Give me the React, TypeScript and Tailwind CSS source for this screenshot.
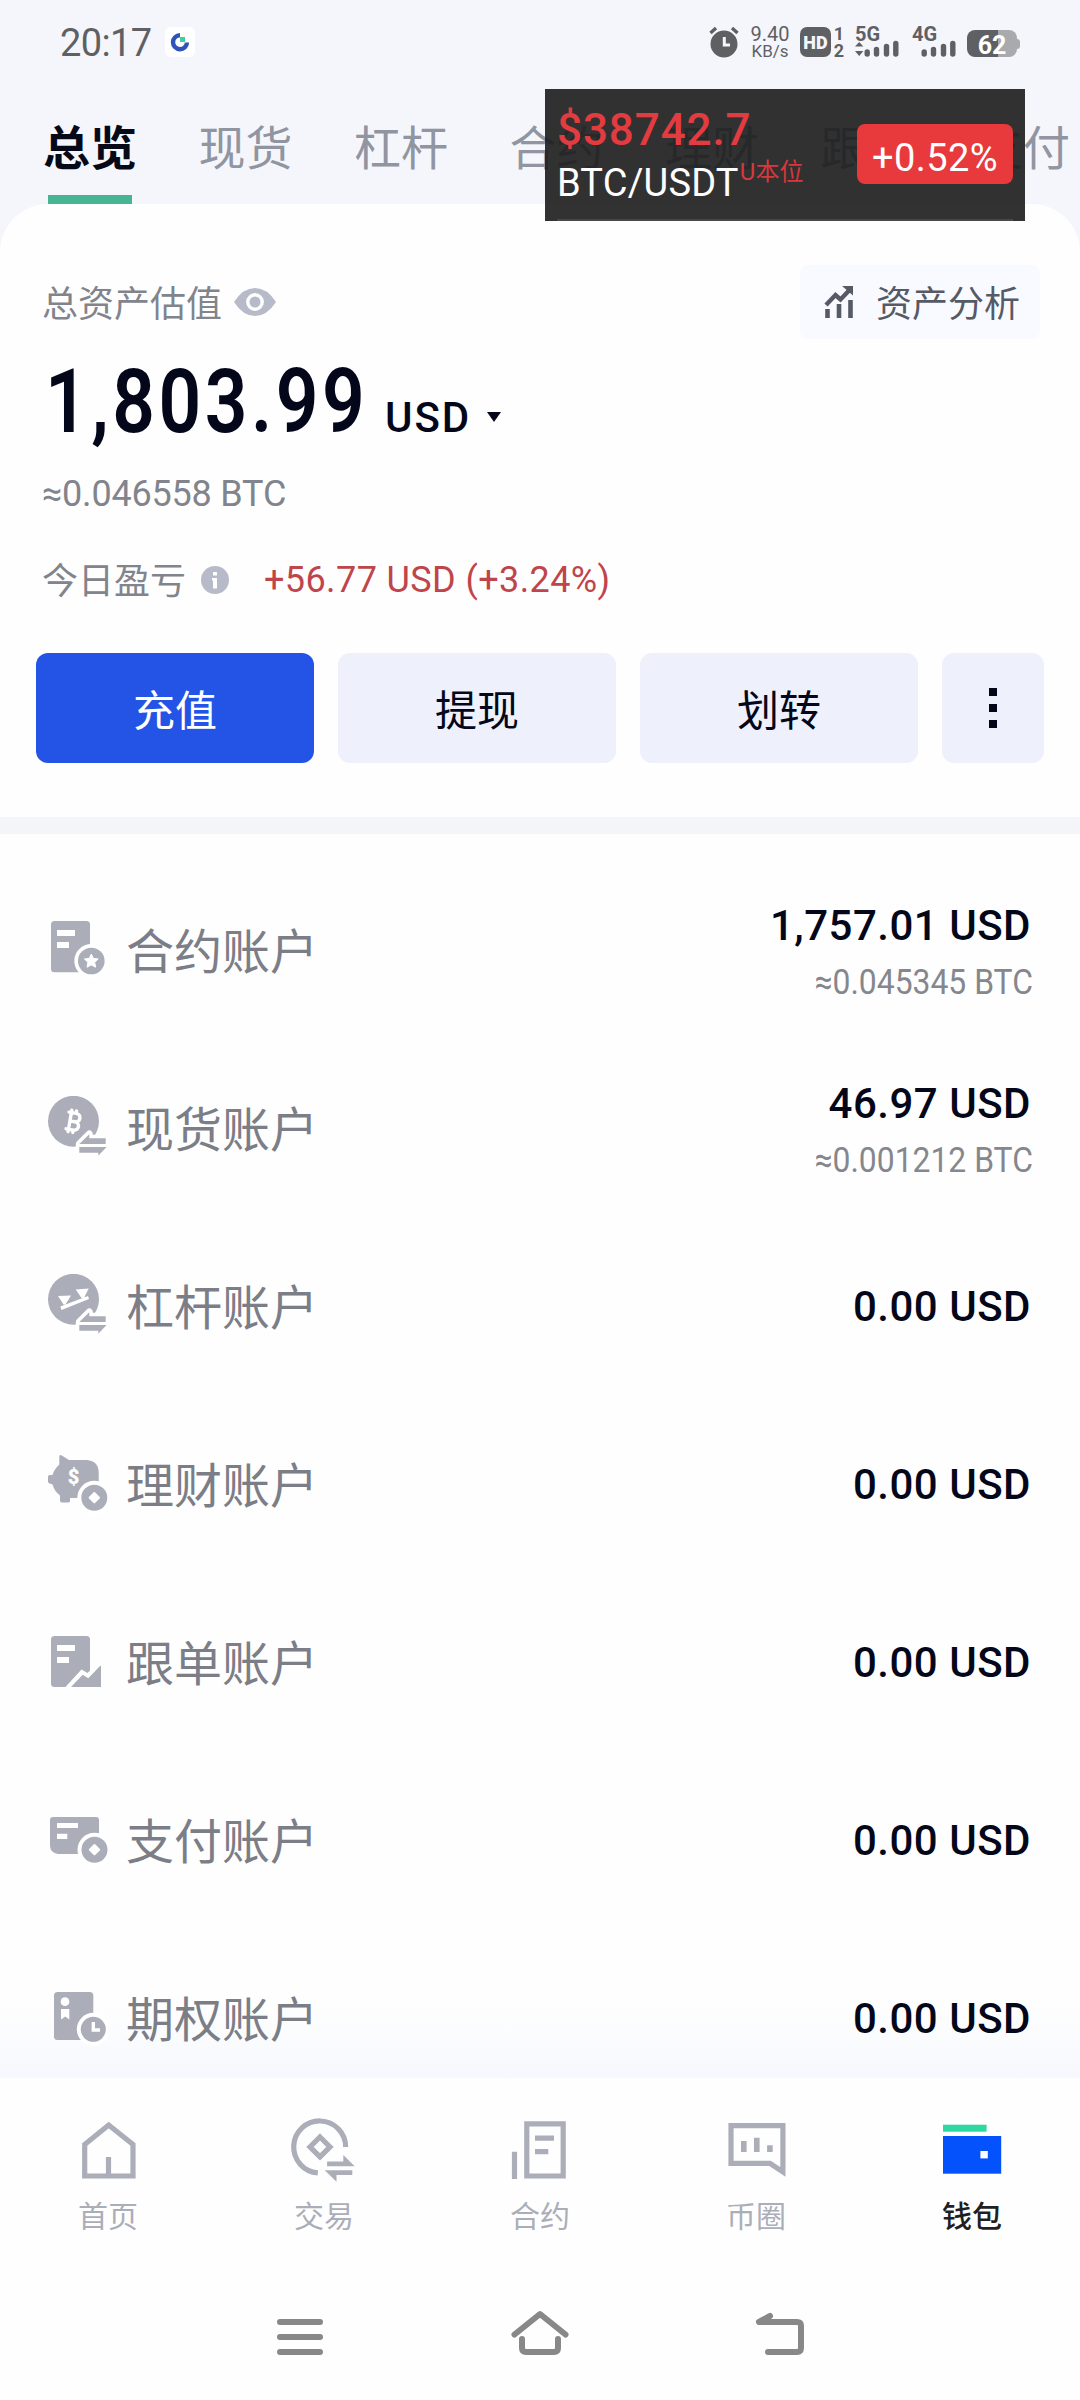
import type { ReactNode } from 'react'
import { Bitcoin } from 'lucide-react'

interface Account {
  name: string
  usd: string
  btc?: string
  icon: ReactNode
}

interface NavItem {
  label: string
  icon: ReactNode
  active?: boolean
}

const GREY = '#abaeb8'

const TABS = ['总览', '现货', '杠杆', '合约', '理财', '跟单', '支付']

function SwapArrows() {
  return (
    <>
      <path
        d="M31.3 48L41.3 38V42.3H57.7V56.7H31.3Z"
        fill="#fff" stroke="#fff" strokeWidth={7} strokeLinejoin="round"
      />
      <path d="M31.3 48L41.3 38.3V42.3H57.7V48Z" fill={GREY} />
      <path d="M31.3 51H58.6L50.3 59.7V56.7H31.3Z" fill={GREY} />
    </>
  )
}

function Coin({ cx, cy }: { cx: number; cy: number }) {
  return (
    <>
      <circle cx={cx} cy={cy} r={17} fill="#fff" />
      <circle cx={cx} cy={cy} r={13} fill={GREY} />
      <rect x={-4.3} y={-4.3} width={8.6} height={8.6} rx={1} fill="#fff" transform={`translate(${cx} ${cy}) rotate(45)`} />
    </>
  )
}

const ACCOUNTS: Account[] = [
  {
    name: '合约账户',
    usd: '1,757.01',
    btc: '0.045345',
    icon: (
      <>
        <rect x={3} y={3} width={39} height={51.3} rx={3.5} fill={GREY} />
        <path d="M9 12H27V18H9ZM9 24H21V30H9Z" fill="#fff" />
        <circle cx={43.3} cy={43} r={17} fill="#fff" />
        <circle cx={43.3} cy={43} r={13.3} fill={GREY} />
        <path d="M43.3 36L45.4 40.4L50.2 41L46.7 44.3L47.6 49.2L43.3 46.9L39 49.2L39.9 44.3L36.4 41L41.2 40.4Z" fill="#fff" stroke="#fff" strokeLinejoin="round" />
      </>
    ),
  },
  {
    name: '现货账户',
    usd: '46.97',
    btc: '0.001212',
    icon: (
      <>
        <circle cx={25.5} cy={25.3} r={25.5} fill={GREY} />
        <Bitcoin x={11} y={11} width={29} height={29} color="#fff" strokeWidth={2.8} />
        <SwapArrows />
      </>
    ),
  },
  {
    name: '杠杆账户',
    usd: '0.00',
    icon: (
      <>
        <circle cx={25.5} cy={25.3} r={25.5} fill={GREY} />
        <path d="M10 22L23 21.5L17.5 30.5H15.5ZM12.3 32.5L40 22L41 25L13.5 36ZM27.7 15.5L40.7 14.5L36 24H33.5Z" fill="#fff" />
        <SwapArrows />
      </>
    ),
  },
  {
    name: '理财账户',
    usd: '0.00',
    icon: (
      <>
        <path d="M11.3 4.5Q11.6 2.3 13.8 3.6L21 8H39Q50.7 9 50.7 21V46H22V49Q22 50.5 20 50.5H14Q12 50.5 12 48.5V43.5Q6.5 39.5 4.6 32.5L1.5 31.5Q0 31 0 29.5V24.5Q0 23 2 23H4.5Q6 17.5 11.3 12.5Z" fill={GREY} />
        <text x={25.5} y={31.5} textAnchor="middle" fontSize={20} fontWeight={900} fill="#fff">$</text>
        <Coin cx={46.3} cy={45.7} />
      </>
    ),
  },
  {
    name: '跟单账户',
    usd: '0.00',
    icon: (
      <>
        <rect x={3} y={6} width={39} height={51} rx={3.5} fill={GREY} />
        <path d="M9 15H27V21H9ZM9 27H21V33H9Z" fill="#fff" />
        <path d="M16.5 58L33.5 39.5L39.5 43L52 31V58Z" fill="#fff" />
        <path d="M23 57L34.7 44.8L40.3 48.2L52 36Q53 35 53 37V57Z" fill={GREY} />
      </>
    ),
  },
  {
    name: '支付账户',
    usd: '0.00',
    icon: (
      <>
        <path d="M5 9H48Q51 9 51 12V46H10Q2 45 2 37V12Q2 9 5 9Z" fill={GREY} />
        <path d="M9 15H30V20H9ZM9 25.7H19.3V31H9Z" fill="#fff" />
        <Coin cx={46.5} cy={41.7} />
      </>
    ),
  },
  {
    name: '期权账户',
    usd: '0.00',
    icon: (
      <>
        <rect x={6} y={6} width={39.3} height={48} rx={3.5} fill={GREY} />
        <circle cx={17} cy={15.7} r={4.4} fill="#fff" />
        <path d="M13 23H21.3V33.5L17.2 30.5L13 33.5Z" fill="#fff" />
        <circle cx={45.3} cy={43.3} r={16.5} fill="#fff" />
        <circle cx={45.3} cy={43.3} r={12.5} fill={GREY} />
        <path d="M45.3 36V44H52" fill="none" stroke="#fff" strokeWidth={3.4} />
      </>
    ),
  },
]

const NAV: NavItem[] = [
  {
    label: '首页',
    icon: <path d="M12.7 64V32.5L36.7 13L61 32.5V64ZM36.5 64V45" fill="none" stroke={GREY} strokeWidth={5.2} />,
  },
  {
    label: '交易',
    icon: (
      <>
        <path d="M57.7 35A26 26 0 1 0 29.8 60.9M32 25L42 34.9L32 44.8L22 34.9Z" fill="none" stroke={GREY} strokeWidth={5.2} />
        <path d="M39.1 54.3V49.5H55.3V43L66.7 54.3ZM36.7 58.3H64.3V63H48.5V69.7Z" fill={GREY} />
      </>
    ),
  },
  {
    label: '合约',
    icon: <path d="M10.5 39.7V67M22.8 11.8H59.2V64H22.8ZM31 26.2H50M31 39.7H44.3" fill="none" stroke={GREY} strokeWidth={5.2} />,
  },
  {
    label: '币圈',
    icon: (
      <>
        <path d="M11 13.6H62.9V59.8L50 51.3H11Z" fill="none" stroke={GREY} strokeWidth={5.2} />
        <path d="M23.8 29V40M36.8 25.7V40M49.9 33.3V40" stroke={GREY} strokeWidth={5.6} />
      </>
    ),
  },
  {
    label: '钱包',
    active: true,
    icon: (
      <>
        <rect x={7} y={12.7} width={43.6} height={7} fill="#2ed8a3" />
        <rect x={7} y={24} width={58.2} height={37.7} fill="#0452fc" />
        <rect x={44.4} y={39} width={7.4} height={7.4} fill="#fff" />
      </>
    ),
  },
]

function Signal({ label, data }: { label: string; data?: boolean }) {
  return (
    <div className="flex h-[30px] w-[45px] flex-col">
      <span className="text-[20px] leading-[14px] font-bold">{label}</span>
      <svg className="-mt-px h-[17px] w-[45px]" viewBox="0 0 45 17" fill="none" aria-hidden="true">
        {data && <path d="M4.2 2L8.4 6.5H0ZM0 11H8.4L4.2 16Z" fill="currentColor" />}
        <path d="M12.2 12V14M21.5 9.5V14M31.5 6.5V14M40.8 3.5V14" stroke="currentColor" strokeWidth={5.4} strokeLinecap="round" />
      </svg>
    </div>
  )
}

function StatusBar() {
  return (
    <div className="flex h-[84px] items-center justify-between pr-[60px] pl-[60px] text-[#5f6063]">
      <div className="flex items-center gap-[13px]">
        <span className="pt-[2px] text-[38px] leading-none tracking-[-0.6px]">20:17</span>
        <div className="flex size-[30px] items-center justify-center rounded-md bg-white">
          <svg className="size-[20px]" viewBox="0 0 20 20" aria-hidden="true">
            <path d="M10 3.2A7 7 0 1 0 17 10.5" fill="none" stroke="#2f54b8" strokeWidth={4.4} />
            <rect x={10} y={5} width={5} height={5} fill="#3fd0a2" />
          </svg>
        </div>
      </div>

      <div className="flex items-center">
        <svg className="h-[32px] w-[30px]" viewBox="0 0 30 32" aria-hidden="true">
          <circle cx={15} cy={18} r={13.5} fill="currentColor" />
          <path d="M1.5 7L7 2M28.5 7L23 2" stroke="currentColor" strokeWidth={3.4} />
          <path d="M15.3 11V19H21" fill="none" stroke="#f4f6fb" strokeWidth={3} />
        </svg>
        <div className="ml-[11px] flex w-[40px] flex-col items-center">
          <span className="text-[20px] leading-[17px]">9.40</span>
          <span className="text-[17px] leading-[16px]">KB/s</span>
        </div>
        <div className="ml-[10px] flex h-[30px] w-[31px] items-center justify-center rounded-[7px] bg-[#5f6063] pt-px text-[18px] leading-none font-black text-[#f4f6fb]">
          HD
        </div>
        <div className="ml-[2px] flex w-[12px] flex-col items-center text-[18px] leading-[17px] font-bold">
          <span>1</span>
          <span>2</span>
        </div>
        <div className="ml-[10px]">
          <Signal label="5G" data />
        </div>
        <div className="ml-[12px]">
          <Signal label="4G" />
        </div>
        <div className="ml-[10px] flex items-center pt-[3px]">
          <div className="flex h-[27px] w-[50px] items-center justify-center rounded-[8px] bg-linear-to-r from-[#5f6063] from-62% to-[#a9aaad] to-62% pt-[3px] text-[25px] leading-none font-bold text-white">
            62
          </div>
          <div className="h-[10px] w-[3px] rounded-r-sm bg-[#a9aaad]" />
        </div>
      </div>
    </div>
  )
}

function PriceTicker() {
  return (
    <div className="absolute top-[89px] left-[545px] h-[132px] w-[480px] bg-[#1c1c1c]/90">
      <div className="flex h-[129px] items-center justify-between pr-[12px] pl-[12px]">
        <div className="flex flex-col pt-[7px]">
          <span className="text-[44px] leading-[52px] font-medium tracking-[0.9px] text-[#e23c41]">$38742.7</span>
          <span className="flex text-[38px] leading-[55px] tracking-[0.2px] text-white">
            BTC/USDT
            <span className="-mt-[11px] ml-px text-[24px] text-[#d8373c]">U本位</span>
          </span>
        </div>
        <div className="flex h-[60px] w-[156px] items-center justify-center rounded-lg bg-[#e8393d] pt-[8px] text-[38px] leading-none tracking-[0.4px] text-white">
          +0.52%
        </div>
      </div>
      <div className="mx-[12px] mt-px h-[2px] bg-[#484848]" />
    </div>
  )
}

function Tabs() {
  return (
    <div className="flex h-[120px] gap-[59.5px] overflow-hidden pl-[42px]">
      {TABS.map((tab, i) => (
        <div key={tab} className="flex h-full w-[96px] shrink-0 flex-col items-center">
          <span
            className={
              i === 0
                ? 'mt-[30px] h-[81px] text-[47px] leading-[70px] font-bold whitespace-nowrap text-[#060a18]'
                : 'mt-[30px] h-[81px] text-[47px] leading-[70px] whitespace-nowrap text-[#9095a1]'
            }
          >
            {tab}
          </span>
          {i === 0 && <span className="h-[9px] w-[84px] bg-[#47b592]" />}
        </div>
      ))}
    </div>
  )
}

function Summary() {
  return (
    <section className="h-[613px] rounded-t-[48px] bg-[#fefefe] pt-[61px]">
      <div className="flex h-[74px] items-center justify-between pr-[40px] pl-[42px]">
        <div className="flex items-center gap-[12px]">
          <span className="pt-[6px] text-[36px] leading-[50px] text-[#81848c]">总资产估值</span>
          <svg className="h-[28px] w-[42px]" viewBox="0 0 42 28" aria-hidden="true">
            <path d="M0 14Q9 0 21 0T42 14Q33 28 21 28T0 14Z" fill="#b7bac8" />
            <circle cx={21} cy={14} r={7.2} fill="none" stroke="#fff" strokeWidth={3.4} />
          </svg>
        </div>
        <button type="button" className="flex h-full w-[240px] items-center rounded-lg bg-[#f9faff] pl-[24px]">
          <svg className="h-[32px] w-[30px]" viewBox="0 0 30 32" fill="none" stroke="#565a66" aria-hidden="true">
            <path d="M2 19L11.5 9L16.5 13.5L26 3.5" strokeWidth={4.4} />
            <path d="M18 0H29V9.5Z" fill="#565a66" stroke="none" />
            <path d="M3.5 23V32M15 18V32M26.5 14V32" strokeWidth={4.6} />
          </svg>
          <span className="ml-[22px] pt-[6px] text-[36px] leading-[50px] text-[#565a66]">资产分析</span>
        </button>
      </div>

      <div className="mt-[21px] flex h-[84px] items-baseline pl-[45px] text-[#04071a]">
        <span className="w-[340px] origin-left scale-x-[0.84] text-[89px] leading-[84px] font-semibold tracking-[4.2px]">1,803.99</span>
        <span className="text-[42px] leading-none font-medium tracking-[1.9px]">USD</span>
        <svg className="ml-[16px] h-[20px] w-[14px]" viewBox="0 0 14 20" aria-hidden="true">
          <path d="M0 0H14L7 10Z" fill="currentColor" />
        </svg>
      </div>

      <p className="mt-[25px] pl-[42px] text-[36px] leading-[50px] tracking-[-0.2px] text-[#81848c]">≈0.046558 BTC</p>

      <div className="mt-[36px] flex h-[50px] items-center pl-[42px] text-[36px] leading-[50px] text-[#81848c]">
        <span className="pt-[4px]">今日盈亏</span>
        <svg className="ml-[15px] size-[28px]" viewBox="0 0 28 28" aria-hidden="true">
          <circle cx={14} cy={14} r={14} fill="#b7bac8" />
          <path d="M12 6H16V9.5H12ZM11 12H16V22.5H12V14.5H11Z" fill="#fff" />
        </svg>
        <span className="ml-[35px] tracking-[0.4px] text-[#bf454b]">+56.77 USD (+3.24%)</span>
      </div>

      <div className="mt-[48px] flex h-[110px] gap-[24px] px-[36px] text-[42px] text-[#04071a]">
        <button type="button" className="flex-1 rounded-xl bg-[#2354e6] pt-[6px] text-white">充值</button>
        <button type="button" className="flex-1 rounded-xl bg-[#eef0fb] pt-[6px]">提现</button>
        <button type="button" className="flex-1 rounded-xl bg-[#eef0fb] pt-[6px]">划转</button>
        <button type="button" className="flex w-[102px] flex-col items-center justify-center gap-[8px] rounded-xl bg-[#eef0fb]">
          <span className="size-[8px] bg-[#04071a]" />
          <span className="size-[8px] bg-[#04071a]" />
          <span className="size-[8px] bg-[#04071a]" />
        </button>
      </div>
    </section>
  )
}

function AccountRow({ account }: { account: Account }) {
  return (
    <li className="flex h-[178px] items-center pr-[49px] pl-[48px]">
      <svg className="h-[66px] w-[60px]" viewBox="0 0 60 66" aria-hidden="true">
        {account.icon}
      </svg>
      <span className="ml-[18px] pt-[4px] text-[48px] leading-[64px] text-[#7b7e87]">{account.name}</span>
      <div className="ml-auto flex flex-col items-end">
        <span className="text-[42px] leading-[56px] font-medium tracking-[0.5px] text-[#04071a]">{account.usd} USD</span>
        {account.btc && (
          <span className="-mr-[2px] -mb-[7px] origin-right scale-x-[0.91] text-[35px] leading-[57px] text-[#85878d]">≈{account.btc} BTC</span>
        )}
      </div>
    </li>
  )
}

export default function App() {
  return (
    <div className="relative flex h-[2400px] w-[1080px] flex-col overflow-hidden bg-[#fefefe] font-[Roboto,'Noto_Sans_CJK_SC',sans-serif]">
      <header className="-mb-[48px] bg-[#f4f6fb] pb-[48px]">
        <StatusBar />
        <Tabs />
      </header>
      <Summary />
      <div className="h-[17px] shrink-0 bg-[#f3f5f9]" />

      <ul className="h-[1244px] shrink-0 overflow-hidden bg-linear-to-b from-[#fefefe] from-94% to-[#f6f8fd] pt-[28px]">
        {ACCOUNTS.map((account) => (
          <AccountRow key={account.name} account={account} />
        ))}
      </ul>

      <nav className="flex h-[190px] shrink-0 bg-[#fefefe] pt-[34px]">
        {NAV.map((item) => (
          <div key={item.label} className="flex flex-1 flex-col items-center">
            <svg className="size-[72px]" viewBox="0 0 72 72" aria-hidden="true">
              {item.icon}
            </svg>
            <span
              className={
                item.active
                  ? 'mt-[11px] text-[30px] leading-[44px] font-medium text-[#1e1f24]'
                  : 'mt-[11px] text-[30px] leading-[44px] text-[#abaeb8]'
              }
            >
              {item.label}
            </span>
          </div>
        ))}
      </nav>

      <div className="flex h-[132px] shrink-0 items-center justify-center gap-[180px] pt-px">
        <svg className="size-[60px]" viewBox="0 0 60 60" fill="none" stroke="#888" strokeWidth={6} strokeLinecap="round" aria-hidden="true">
          <path d="M10 17H50M10 32H50M10 47H50" />
        </svg>
        <svg className="size-[60px]" viewBox="0 0 60 60" fill="none" stroke="#888" strokeWidth={6} strokeLinecap="round" strokeLinejoin="round" aria-hidden="true">
          <path d="M4.5 29.5L30 9L55.5 29.5M12 34V43Q12 47 16 47H44Q48 47 48 43V34" />
        </svg>
        <svg className="size-[60px]" viewBox="0 0 60 60" fill="none" stroke="#888" strokeWidth={6} strokeLinecap="round" strokeLinejoin="round" aria-hidden="true">
          <path d="M20 11L9 17H47Q51 17 51 21V43Q51 47 47 47H18" />
        </svg>
      </div>

      <PriceTicker />
    </div>
  )
}
